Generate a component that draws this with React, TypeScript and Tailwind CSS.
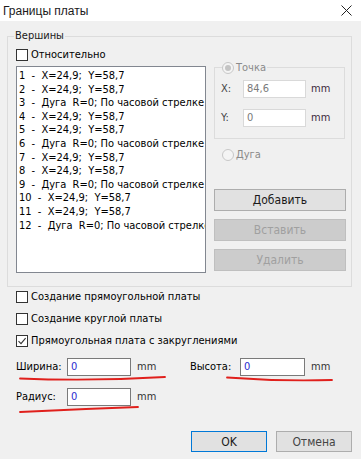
import React from 'react';

const listRows = [
  '1  -  X=24,9;  Y=58,7',
  '2  -  X=24,9;  Y=58,7',
  '3  -  Дуга  R=0; По часовой стрелке',
  '4  -  X=24,9;  Y=58,7',
  '5  -  X=24,9;  Y=58,7',
  '6  -  Дуга  R=0; По часовой стрелке',
  '7  -  X=24,9;  Y=58,7',
  '8  -  X=24,9;  Y=58,7',
  '9  -  Дуга  R=0; По часовой стрелке',
  '10  -  X=24,9;  Y=58,7',
  '11  -  X=24,9;  Y=58,7',
  '12  -  Дуга  R=0; По часовой стрелке',
];

const Checkbox = ({ checked = false }: { checked?: boolean }) => (
  <span className="flex h-[12px] w-[12px] shrink-0 items-center justify-center border border-[#333] bg-white">
    {checked && (
      <svg width="10" height="10" viewBox="0 0 10 10">
        <path d="M1.5 5.2 L4 7.6 L8.6 2.2" fill="none" stroke="#333" strokeWidth="1.1" />
      </svg>
    )}
  </span>
);

const Radio = ({ selected = false }: { selected?: boolean }) => (
  <span className="flex h-[12px] w-[12px] shrink-0 items-center justify-center rounded-full border border-[#c8c8c8] bg-[#f4f4f4]">
    {selected && <span className="h-[6px] w-[6px] rounded-full bg-[#c4c4c4]" />}
  </span>
);

const field = 'h-[18px] border border-[#7a7a7a] bg-white pl-[3px] leading-[16px]';

export default function App() {
  return (
    <div
      className="relative flex h-[459px] w-[361px] flex-col overflow-hidden text-[11px] leading-[16px] text-black"
      style={{ fontFamily: '"DejaVu Sans Condensed", "DejaVu Sans", sans-serif' }}
    >
      {/* title bar */}
      <div className="flex h-[21px] shrink-0 items-center justify-between bg-white pl-[3px] pr-[9px]">
        <span className="text-[12px] text-[#1a1a1a]" style={{ fontFamily: '"Liberation Sans", Arial, sans-serif' }}>
          Границы платы
        </span>
        <svg width="11" height="11" viewBox="0 0 11 11">
          <path d="M0.5 0.5 L10.5 10.5 M10.5 0.5 L0.5 10.5" stroke="#222" strokeWidth="1" />
        </svg>
      </div>

      <div className="flex flex-1 flex-col bg-[#f0f0f0]">
        {/* Вершины group */}
        <div className="relative ml-[7px] mt-[15px] h-[251px] w-[345px] border border-[#dcdcdc] pl-[8px] pt-[10px]">
          <span className="absolute left-[6px] top-[-9px] bg-[#f0f0f0] px-[1px] text-[#1a1a1a]">Вершины</span>
          <div className="flex items-center gap-[3px]">
            <Checkbox />
            <span>Относительно</span>
          </div>
          <div className="mt-[3px] flex">
            <div className="h-[207px] w-[190px] overflow-hidden border border-[#828790] bg-white pl-[2px] pt-[2px] text-[11px] leading-[13.6px] whitespace-pre">
              {listRows.map((r) => (
                <div key={r}>{r}</div>
              ))}
            </div>

            <div className="ml-[8px] flex w-[132px] flex-col">
              {/* Точка group */}
              <div className="relative mt-[1px] h-[72px] w-[131px] border border-[#dcdcdc] pl-[6px] pt-[12px]">
                <span className="absolute left-[7px] top-[-8px] flex items-center gap-[2px] bg-[#f0f0f0] pr-[1px] text-[#8a8a8a]">
                  <Radio selected />
                  <span>Точка</span>
                </span>
                <div className="flex items-center">
                  <span className="w-[22px] text-[#444]">X:</span>
                  <span className={`${field} w-[63px] border-[#d9d9d9] text-[#7a7a7a]`}>84,6</span>
                  <span className="ml-[5px] text-[#3c2a3c]">mm</span>
                </div>
                <div className="mt-[11px] flex items-center">
                  <span className="w-[22px] text-[#444]">Y:</span>
                  <span className={`${field} w-[63px] border-[#d9d9d9] text-[#7a7a7a]`}>0</span>
                  <span className="ml-[5px] text-[#3c2a3c]">mm</span>
                </div>
              </div>
              <div className="mt-[8px] flex items-center gap-[2px] pl-[8px] text-[#8a8a8a]">
                <Radio />
                <span>Дуга</span>
              </div>
              <button className="mt-[26px] h-[22px] w-[132px] border border-[#adadad] bg-[#e1e1e1] text-[12px] text-[#1a1a1a]">
                Добавить
              </button>
              <button className="mt-[8px] h-[22px] w-[132px] border border-[#bfbfbf] bg-[#cccccc] text-[12px] text-[#a0a0a0]">
                Вставить
              </button>
              <button className="mt-[8px] h-[22px] w-[132px] border border-[#bfbfbf] bg-[#cccccc] text-[12px] text-[#a0a0a0]">
                Удалить
              </button>
            </div>
          </div>
        </div>

        {/* board options */}
        <div className="ml-[16px] mt-[2px] flex flex-col gap-[6px]">
          <div className="flex items-center gap-[3px]">
            <Checkbox />
            <span>Создание прямоугольной платы</span>
          </div>
          <div className="flex items-center gap-[3px]">
            <Checkbox />
            <span>Создание круглой платы</span>
          </div>
          <div className="flex items-center gap-[3px]">
            <Checkbox checked />
            <span>Прямоугольная плата с закруглениями</span>
          </div>
        </div>

        <div className="ml-[16px] mt-[9px] flex items-center">
          <span className="w-[51px]">Ширина:</span>
          <span className={`${field} w-[64px] text-[#2b2bd0]`}>0</span>
          <span className="ml-[6px] w-[53px] text-[#333]">mm</span>
          <span className="w-[50px]">Высота:</span>
          <span className={`${field} w-[65px] text-[#2b2bd0]`}>0</span>
          <span className="ml-[6px] text-[#333]">mm</span>
        </div>
        <div className="ml-[16px] mt-[12px] flex items-center">
          <span className="w-[51px]">Радиус:</span>
          <span className={`${field} w-[64px] text-[#2b2bd0]`}>0</span>
          <span className="ml-[6px] text-[#333]">mm</span>
        </div>

        <div className="mt-[25px] flex justify-end gap-[9px] pr-[9px]">
          <button className="h-[21px] w-[76px] border border-[#0078d7] bg-[#e1e1e1] text-[12px] text-[#1a1a1a]">OK</button>
          <button className="h-[21px] w-[76px] border border-[#adadad] bg-[#e1e1e1] text-[12px] text-[#444]">Отмена</button>
        </div>
      </div>

      {/* red pen marks */}
      <svg className="pointer-events-none absolute left-0 top-0" width="361" height="459" viewBox="0 0 361 459">
        <path d="M20 378.5 Q90 381.5 165 377" fill="none" stroke="#e0201c" strokeWidth="1.8" strokeLinecap="round" />
        <path d="M227 377.5 Q280 381.5 332 380" fill="none" stroke="#e0201c" strokeWidth="1.8" strokeLinecap="round" />
        <path d="M20 412 Q80 409 138 407" fill="none" stroke="#e0201c" strokeWidth="1.8" strokeLinecap="round" />
      </svg>
    </div>
  );
}
